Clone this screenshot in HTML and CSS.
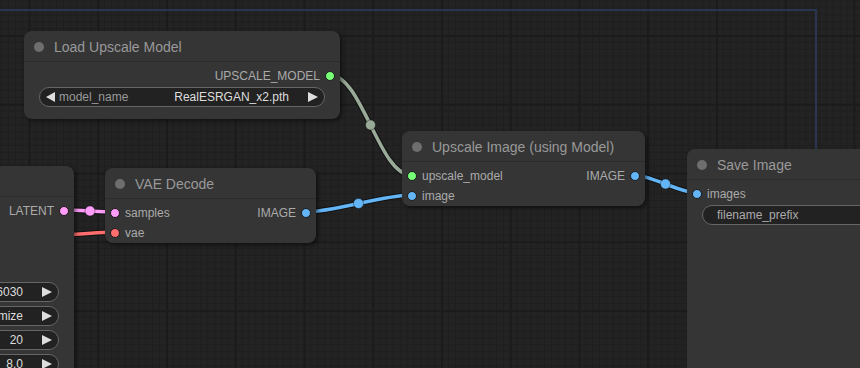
FILE: index.html
```html
<!DOCTYPE html>
<html lang="en">
<head>
    <meta charset="UTF-8">
    <title>Workflow</title>
    <link rel="stylesheet" href="styles.css">
</head>
<body>
<div class="canvas">
    <!-- group frame and links, drawn under the nodes -->
    <svg class="links" width="860" height="368" viewBox="0 0 860 368">
        <path class="group-frame" d="M0 10 H816 V368"/>

        <path class="link-border" d="M20 238 C44 238, 91 232, 115 232"/>
        <path class="link link-vae" d="M20 238 C44 238, 91 232, 115 232"/>

        <path class="link-border" d="M65 210 C77.5 210, 102.5 212, 115 212"/>
        <path class="link link-latent" d="M65 210 C77.5 210, 102.5 212, 115 212"/>
        <circle class="link-mid link-latent-fill" cx="90" cy="211" r="5"/>

        <path class="link-border" d="M330 75 C362 75, 379 175, 411 175"/>
        <path class="link link-default" d="M330 75 C362 75, 379 175, 411 175"/>
        <circle class="link-mid link-default-fill" cx="370.5" cy="125" r="5"/>

        <path class="link-border" d="M306 212 C332.6 212, 384.4 195, 411 195"/>
        <path class="link link-image" d="M306 212 C332.6 212, 384.4 195, 411 195"/>
        <circle class="link-mid link-image-fill" cx="358.5" cy="203.5" r="5"/>

        <path class="link-border" d="M634 175 C650.4 175, 680.6 193, 697 193"/>
        <path class="link link-image" d="M634 175 C650.4 175, 680.6 193, 697 193"/>
        <circle class="link-mid link-image-fill" cx="665.5" cy="184" r="5"/>
    </svg>

    <!-- KSampler, mostly off screen: only its right edge shows -->
    <div class="node node-sampler">
        <div class="node-title"><span class="title-dot"></span></div>
        <div class="node-body">
            <div class="slot-row">
                <div class="slot-in"><span class="dot"></span></div>
                <div class="slot-out">LATENT<span class="dot dot-latent"></span></div>
            </div>
            <div class="slot-row"><div class="slot-in"><span class="dot"></span></div></div>
            <div class="slot-row"><div class="slot-in"><span class="dot"></span></div></div>
            <div class="slot-row"><div class="slot-in"><span class="dot"></span></div></div>
            <div class="widgets">
                <div class="widget"><span class="arrow-l"></span><span class="w-label"></span><span class="w-value">6030</span><span class="arrow-r"></span></div>
                <div class="widget"><span class="arrow-l"></span><span class="w-label"></span><span class="w-value">mize</span><span class="arrow-r"></span></div>
                <div class="widget"><span class="arrow-l"></span><span class="w-label"></span><span class="w-value">20</span><span class="arrow-r"></span></div>
                <div class="widget"><span class="arrow-l"></span><span class="w-label"></span><span class="w-value">8.0</span><span class="arrow-r"></span></div>
            </div>
        </div>
    </div>

    <div class="node node-load">
        <div class="node-title"><span class="title-dot"></span>Load Upscale Model</div>
        <div class="node-body">
            <div class="slot-row slot-row-end">
                <div class="slot-out">UPSCALE_MODEL<span class="dot dot-default"></span></div>
            </div>
            <div class="widgets">
                <div class="widget"><span class="arrow-l"></span><span class="w-label">model_name</span><span class="w-value">RealESRGAN_x2.pth</span><span class="arrow-r"></span></div>
            </div>
        </div>
    </div>

    <div class="node node-vae">
        <div class="node-title"><span class="title-dot"></span>VAE Decode</div>
        <div class="node-body">
            <div class="slot-row">
                <div class="slot-in"><span class="dot dot-latent"></span>samples</div>
                <div class="slot-out">IMAGE<span class="dot dot-image"></span></div>
            </div>
            <div class="slot-row">
                <div class="slot-in"><span class="dot dot-vae"></span>vae</div>
            </div>
        </div>
    </div>

    <div class="node node-upscale">
        <div class="node-title"><span class="title-dot"></span>Upscale Image (using Model)</div>
        <div class="node-body">
            <div class="slot-row">
                <div class="slot-in"><span class="dot dot-default"></span>upscale_model</div>
                <div class="slot-out">IMAGE<span class="dot dot-image"></span></div>
            </div>
            <div class="slot-row">
                <div class="slot-in"><span class="dot dot-image"></span>image</div>
            </div>
        </div>
    </div>

    <div class="node node-save">
        <div class="node-title"><span class="title-dot"></span>Save Image</div>
        <div class="node-body">
            <div class="slot-row">
                <div class="slot-in"><span class="dot dot-image"></span>images</div>
            </div>
            <div class="widgets">
                <div class="widget widget-text"><span class="w-label">filename_prefix</span></div>
            </div>
        </div>
    </div>
</div>
</body>
</html>
```

FILE: styles.css
```css
body {
    margin: 0;
    background: #222;
}
.canvas {
    position: relative;
    width: 860px;
    height: 368px;
    overflow: hidden;
    background-color: #232323;
    background-image:
        linear-gradient(to right, #1b1b1b 2px, transparent 2px),
        linear-gradient(to bottom, #1b1b1b 2px, transparent 2px),
        linear-gradient(to right, #1e1e1e 1px, transparent 1px),
        linear-gradient(to bottom, #1e1e1e 1px, transparent 1px);
    background-size: 68.75px 68.75px, 68.75px 68.75px, 6.875px 6.875px, 6.875px 6.875px;
    background-position: 28.5px 35px, 28.5px 35px, 28.5px 35px, 28.5px 35px;
    font-family: "Liberation Sans", Arial, sans-serif;
}
.links {
    position: absolute;
    left: 0;
    top: 0;
}
.group-frame {
    fill: none;
    stroke: #2a3552;
    stroke-width: 2;
}
.link-border {
    fill: none;
    stroke: rgba(0, 0, 0, 0.5);
    stroke-width: 5.5;
}
.link {
    fill: none;
    stroke-width: 3.5;
}
.link-mid {
    stroke: rgba(0, 0, 0, 0.35);
    stroke-width: 1;
}
.link-default { stroke: #9a9; }
.link-default-fill { fill: #9a9; }
.link-image { stroke: #64b5f6; }
.link-image-fill { fill: #64b5f6; }
.link-latent { stroke: #ff9cf9; }
.link-latent-fill { fill: #ff9cf9; }
.link-vae { stroke: #ff6e6e; }

/* nodes */
.node {
    position: absolute;
    background: #353535;
    border-radius: 8px;
    box-shadow: 2px 2px 4px rgba(0, 0, 0, 0.5);
    color: #aaa;
    font-size: 12px;
}
.node-title {
    height: 29px;
    padding-top: 1px;
    border-bottom: 1px solid #2b2b2b;
    display: flex;
    align-items: center;
    gap: 10px;
    padding-left: 10px;
    color: #999;
    font-size: 14px;
    white-space: nowrap;
}
.title-dot {
    width: 10px;
    height: 10px;
    border-radius: 50%;
    background: #6e6e6e;
    flex: none;
}
.node-body {
    padding-top: 4px;
}
.slot-row {
    height: 20px;
    display: flex;
    align-items: center;
    justify-content: space-between;
}
.slot-row-end {
    justify-content: flex-end;
}
.slot-in, .slot-out {
    display: flex;
    align-items: center;
    gap: 5px;
    white-space: nowrap;
}
.slot-in {
    padding-left: 5px;
}
.slot-out {
    padding-right: 5px;
}
.dot {
    width: 8px;
    height: 8px;
    border: 1px solid #1a1a1a;
    border-radius: 50%;
    background: #777;
    flex: none;
}
.dot-default { background: #7f7; }
.dot-image { background: #64b5f6; }
.dot-latent { background: #ff9cf9; }
.dot-vae { background: #ff6e6e; }

/* widgets */
.widgets {
    margin: 1px 15px 0;
    display: flex;
    flex-direction: column;
    gap: 4px;
}
.widget {
    height: 20px;
    box-sizing: border-box;
    border: 1px solid #666;
    border-radius: 10px;
    background: #222;
    display: flex;
    align-items: center;
    padding: 0 6px;
    white-space: nowrap;
    overflow: hidden;
}
.widget-text {
    padding-left: 14px;
}
.w-label {
    flex: 1;
    color: #999;
    margin-left: 4px;
    overflow: hidden;
}
.widget-text .w-label {
    margin-left: 0;
    color: #aaa;
}
.w-value {
    color: #ddd;
    margin-right: 19px;
}
.arrow-l, .arrow-r {
    width: 0;
    height: 0;
    border-top: 5px solid transparent;
    border-bottom: 5px solid transparent;
    flex: none;
}
.arrow-l {
    border-right: 9px solid #ddd;
}
.arrow-r {
    border-left: 10px solid #ddd;
}

/* node places on the canvas */
.node-sampler {
    left: -246px;
    top: 166px;
    width: 320px;
    height: 300px;
}
.node-load {
    left: 24px;
    top: 31px;
    width: 316px;
    height: 88px;
}
.node-vae {
    left: 105px;
    top: 168px;
    width: 211px;
    height: 75px;
}
.node-upscale {
    left: 402px;
    top: 131px;
    width: 243px;
    height: 75px;
}
.node-save {
    left: 687px;
    top: 149px;
    width: 340px;
    height: 260px;
}
```
